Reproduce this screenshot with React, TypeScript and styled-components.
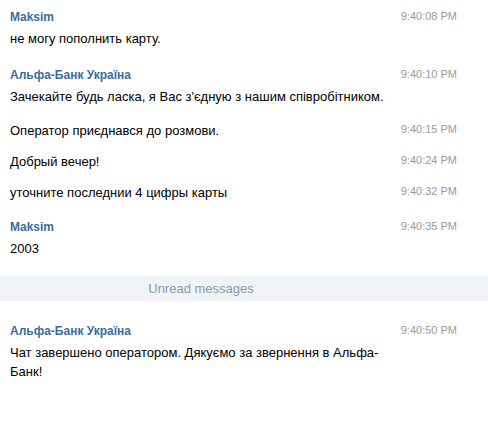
import styled, { createGlobalStyle } from "styled-components";

const GlobalStyle = createGlobalStyle`
  html, body {
    margin: 0;
    padding: 0;
    background: #fff;
  }
  body {
    font-family: "Liberation Sans", Arial, sans-serif;
    -webkit-font-smoothing: antialiased;
  }
`;

const History = styled.div`
  width: 488px;
  display: flex;
  flex-direction: column;
  padding-top: 8px;
`;

const MessageRow = styled.div<{ $gap: number }>`
  display: flex;
  align-items: flex-start;
  padding: 0 31px 0 10px;
  margin-top: ${(p) => p.$gap}px;
`;

const Body = styled.div`
  flex: 1;
  min-width: 0;
  padding-right: 8px;
`;

const Author = styled.div`
  font-size: 12px;
  font-weight: bold;
  line-height: 18px;
  color: #3a6d99;
  margin-bottom: 3px;
`;

const Text = styled.div`
  font-size: 13px;
  line-height: 19px;
  color: #000;
  word-wrap: break-word;
`;

const Time = styled.div`
  width: 57px;
  flex-shrink: 0;
  text-align: right;
  font-size: 11px;
  line-height: 17px;
  color: #999;
  white-space: nowrap;
`;

const UnreadBar = styled.div`
  margin-top: 18px;
  height: 25px;
  background: #f0f4f7;
  display: flex;
  align-items: center;
  justify-content: center;
  padding-right: 86px;
  font-size: 13px;
  color: #8a9aa9;
`;

type Message = {
  author?: string;
  text: string;
  time: string;
  gap: number;
};

const before: Message[] = [
  { author: "Maksim", text: "не могу пополнить карту.", time: "9:40:08 PM", gap: 0 },
  {
    author: "Альфа-Банк Україна",
    text: "Зачекайте будь ласка, я Вас з'єдную з нашим співробітником.",
    time: "9:40:10 PM",
    gap: 18,
  },
  { text: "Оператор приєднався до розмови.", time: "9:40:15 PM", gap: 15 },
  { text: "Добрый вечер!", time: "9:40:24 PM", gap: 12 },
  { text: "уточните последнии 4 цифры карты", time: "9:40:32 PM", gap: 12 },
  { author: "Maksim", text: "2003", time: "9:40:35 PM", gap: 16 },
];

const after: Message[] = [
  {
    author: "Альфа-Банк Україна",
    text: "Чат завершено оператором. Дякуємо за звернення в Альфа-Банк!",
    time: "9:40:50 PM",
    gap: 21,
  },
];

function Row({ m }: { m: Message }) {
  return (
    <MessageRow $gap={m.gap}>
      <Body>
        {m.author && <Author>{m.author}</Author>}
        <Text>{m.text}</Text>
      </Body>
      <Time>{m.time}</Time>
    </MessageRow>
  );
}

export default function App() {
  return (
    <>
      <GlobalStyle />
      <History>
        {before.map((m, i) => (
          <Row key={i} m={m} />
        ))}
        <UnreadBar>Unread messages</UnreadBar>
        {after.map((m, i) => (
          <Row key={i} m={m} />
        ))}
      </History>
    </>
  );
}
